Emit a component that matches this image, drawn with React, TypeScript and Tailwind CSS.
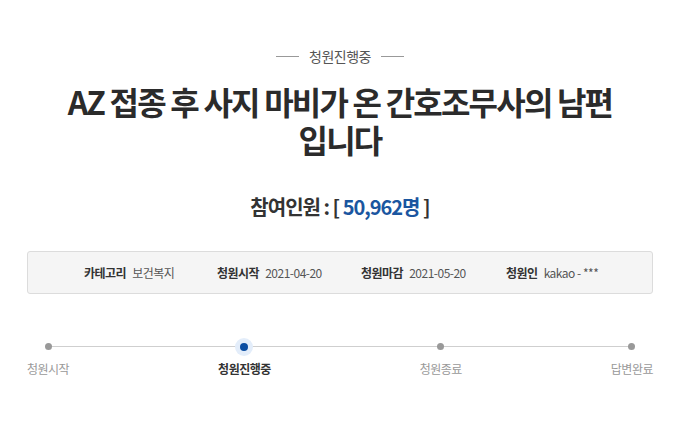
import React from 'react';

const font = { fontFamily: '"Noto Sans CJK KR", "Noto Sans", sans-serif' };

const steps = [
  { label: '청원시작', active: false },
  { label: '청원진행중', active: true },
  { label: '청원종료', active: false },
  { label: '답변완료', active: false },
];

export default function App() {
  return (
    <div className="w-[680px] h-[425px] bg-white overflow-hidden text-[#333]" style={font}>
      <div className="px-[27px] pt-[45px]">
        {/* status heading */}
        <div className="flex items-center justify-center gap-[10px]">
          <span className="w-[23px] h-px bg-[#999]" />
          <span className="text-[14px] leading-[22px] text-[#555] tracking-[-0.5px]">청원진행중</span>
          <span className="w-[23px] h-px bg-[#999]" />
        </div>

        <h1 className="mt-[15px] text-center text-[32px] leading-[38px] font-bold text-[#2b2b2b] tracking-[-1.8px]">
          AZ 접종 후 사지 마비가 온 간호조무사의 남편
          <br />
          입니다
        </h1>

        <p className="mt-[35px] text-center text-[20px] leading-[28px] font-bold text-[#333] tracking-[-1px]">
          참여인원 : [ <span className="text-[#1b56a0]">50,962명</span> ]
        </p>

        {/* info box */}
        <div className="mt-[30px] h-[43px] rounded-[3px] border border-[#dcdcdc] bg-[#f5f5f5] flex items-center pl-[56px] text-[12px] tracking-[-0.5px]">
          <div className="w-[133px] flex gap-[6px]">
            <b className="text-[#333]">카테고리</b>
            <span className="text-[#555]">보건복지</span>
          </div>
          <div className="w-[144px] flex gap-[6px]">
            <b className="text-[#333]">청원시작</b>
            <span className="text-[#555]">2021-04-20</span>
          </div>
          <div className="w-[145px] flex gap-[6px]">
            <b className="text-[#333]">청원마감</b>
            <span className="text-[#555]">2021-05-20</span>
          </div>
          <div className="flex gap-[6px]">
            <b className="text-[#333]">청원인</b>
            <span className="text-[#555]">kakao - ***</span>
          </div>
        </div>

        {/* progress */}
        <div className="relative mt-[44px]">
          <div className="absolute left-[19px] right-[21px] top-[8px] h-px bg-[#cfcfcf]" />
          <div className="relative flex justify-between">
            {steps.map((s) => (
              <div key={s.label} className="flex flex-col items-center">
                <div className="h-[17px] flex items-center justify-center">
                  {s.active ? (
                    <div className="w-[18px] h-[18px] rounded-full bg-[#e3edfa] flex items-center justify-center">
                      <div className="w-[8px] h-[8px] rounded-full bg-[#0b4ea2]" />
                    </div>
                  ) : (
                    <div className="w-[7px] h-[7px] rounded-full bg-[#999]" />
                  )}
                </div>
                <span
                  className={
                    s.active
                      ? 'mt-[4px] text-[12px] leading-[20px] font-bold text-[#333] tracking-[-0.5px]'
                      : 'mt-[4px] text-[12px] leading-[20px] text-[#999] tracking-[-0.5px]'
                  }
                >
                  {s.label}
                </span>
              </div>
            ))}
          </div>
        </div>
      </div>
    </div>
  );
}
